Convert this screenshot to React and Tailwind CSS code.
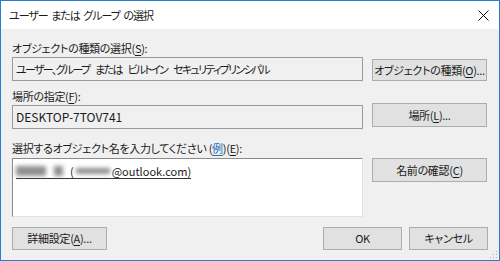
import React from 'react';

const font = { fontFamily: '"Noto Sans CJK JP", "Noto Sans", sans-serif' };

function Btn({ children, className = '' }) {
    return (
        <button
            className={`flex items-center justify-center whitespace-nowrap border border-[#adadad] bg-[#e1e1e1] text-[11px] leading-none text-[#1a1a1a] ${className}`}
        >
            {children}
        </button>
    );
}

function U({ children }) {
    return <span className="underline underline-offset-2">{children}</span>;
}

function Blur({ w, h = 9 }) {
    return (
        <span
            className="inline-block bg-[#8f8f8f] align-middle blur-[2px]"
            style={{ width: w, height: h }}
        />
    );
}

export default function App() {
    return (
        <div
            className="flex h-[261px] w-[500px] flex-col border border-[#2b7bd0] bg-[#f0f0f0] tracking-[-0.3px] text-[#1a1a1a] [font-feature-settings:'palt']"
            style={font}
        >
            {/* Title bar */}
            <div className="flex h-[28px] items-center justify-between bg-white pl-[8px] pr-[8px]">
                <span className="text-[11px] tracking-[-1px] [word-spacing:2px]">
                    ユーザー または グループ の選択
                </span>
                <svg width="11" height="11" viewBox="0 0 11 11" className="mr-[2px]">
                    <path d="M0.5 0.5 L10.5 10.5 M10.5 0.5 L0.5 10.5" stroke="#111" strokeWidth="1" />
                </svg>
            </div>

            {/* Body */}
            <div className="relative flex flex-1 flex-col pl-[11px] pr-[11px] pt-[11px] text-[11px]">
                {/* Object type */}
                <div className="h-[16px] whitespace-nowrap leading-[16px]">
                    オブジェクトの種類の選択(<U>S</U>):
                </div>
                <div className="mt-[1px] flex">
                    <div className="flex h-[24px] w-[351px] items-center whitespace-nowrap border border-[#9a9a9a] pl-[3px] tracking-[-1.7px] [word-spacing:5px]">
                        ユーザー、グループ または ビルトイン セキュリティプリンシパル
                    </div>
                    <Btn className="ml-[9px] mt-[2px] h-[22px] w-[115px]">
                        オブジェクトの種類(<U>O</U>)...
                    </Btn>
                </div>

                {/* Location */}
                <div className="mt-[7px] h-[16px] leading-[16px]">
                    場所の指定(<U>F</U>):
                </div>
                <div className="mt-[1px] flex">
                    <div className="flex h-[24px] w-[351px] items-center border border-[#9a9a9a] pl-[3px] text-[12px] tracking-normal">
                        DESKTOP-7TOV741
                    </div>
                    <Btn className="ml-[9px] mt-[-2px] h-[24px] w-[115px]">
                        場所(<U>L</U>)...
                    </Btn>
                </div>

                {/* Object names */}
                <div className="mt-[11px] h-[16px] whitespace-nowrap leading-[16px]">
                    選択するオブジェクト名を入力してください (
                    <span className="text-[#1a6fc4] underline underline-offset-2">例</span>)(
                    <U>E</U>):
                </div>
                <div className="mt-[2px] flex">
                    <div className="h-[59px] w-[351px] border border-b-[#e3e3e3] border-l-[#8a8a8a] border-r-[#e3e3e3] border-t-[#8a8a8a] bg-white pl-[3px] pt-[4px] tracking-normal">
                        <span className="inline-flex items-center gap-[2px] border-b border-[#333] leading-[14px]">
                            <Blur w={30} h={10} />
                            <span className="w-[4px]" />
                            <Blur w={9} h={10} />
                            <span className="ml-[5px]">(</span>
                            <Blur w={34} h={6} />
                            <span>@outlook.com)</span>
                        </span>
                    </div>
                    <Btn className="ml-[9px] mt-[0px] h-[24px] w-[115px]">
                        名前の確認(<U>C</U>)
                    </Btn>
                </div>

                {/* Footer */}
                <div className="mt-[10px] flex">
                    <Btn className="h-[23px] w-[95px]">
                        詳細設定(<U>A</U>)...
                    </Btn>
                    <div className="flex-1" />
                    <Btn className="h-[23px] w-[79px]">OK</Btn>
                    <Btn className="ml-[7px] h-[23px] w-[79px]">キャンセル</Btn>
                </div>

                {/* Resize grip */}
                <svg width="8" height="8" viewBox="0 0 8 8" className="absolute bottom-[1px] right-[1px]">
                    <rect x="6" y="0" width="1" height="1" fill="#b0b0b0" />
                    <rect x="3" y="3" width="1" height="1" fill="#b0b0b0" />
                    <rect x="6" y="3" width="1" height="1" fill="#b0b0b0" />
                    <rect x="0" y="6" width="1" height="1" fill="#b0b0b0" />
                    <rect x="3" y="6" width="1" height="1" fill="#b0b0b0" />
                    <rect x="6" y="6" width="1" height="1" fill="#b0b0b0" />
                </svg>
            </div>
        </div>
    );
}
